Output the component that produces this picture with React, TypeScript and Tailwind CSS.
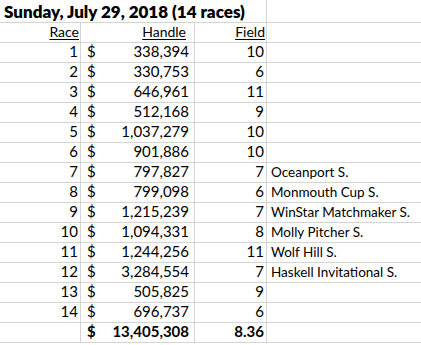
import React from 'react';

const races = [
  { race: 1, handle: '338,394', field: '10', stakes: '' },
  { race: 2, handle: '330,753', field: '6', stakes: '' },
  { race: 3, handle: '646,961', field: '11', stakes: '' },
  { race: 4, handle: '512,168', field: '9', stakes: '' },
  { race: 5, handle: '1,037,279', field: '10', stakes: '' },
  { race: 6, handle: '901,886', field: '10', stakes: '' },
  { race: 7, handle: '797,827', field: '7', stakes: 'Oceanport S.' },
  { race: 8, handle: '799,098', field: '6', stakes: 'Monmouth Cup S.' },
  { race: 9, handle: '1,215,239', field: '7', stakes: 'WinStar Matchmaker S.' },
  { race: 10, handle: '1,094,331', field: '8', stakes: 'Molly Pitcher S.' },
  { race: 11, handle: '1,244,256', field: '11', stakes: 'Wolf Hill S.' },
  { race: 12, handle: '3,284,554', field: '7', stakes: 'Haskell Invitational S.' },
  { race: 13, handle: '505,825', field: '9', stakes: '' },
  { race: 14, handle: '696,737', field: '6', stakes: '' },
];

const cell = 'h-[20px] border-b border-[#d4d4d4] flex items-end leading-none pb-[3px] whitespace-nowrap';

const App: React.FC = () => {
  return (
    <div
      className="w-[421px] h-[345px] bg-white text-black overflow-hidden text-[14px]"
      style={{ fontFamily: 'Lato, "Open Sans", sans-serif' }}
    >
      <div className="grid grid-cols-[81px_114px_72px_1fr]">
        {/* title row */}
        <div className="col-span-3 h-[23px] border-b border-r border-[#d4d4d4] flex items-end pb-[2px] pl-[4px] text-[17px] font-extrabold leading-none whitespace-nowrap">
          Sunday, July 29, 2018 (14 races)
        </div>
        <div className="h-[23px] border-b border-[#d4d4d4]" />

        {/* header row */}
        <div className={`${cell} border-r justify-end pr-[1px]`}>
          <span className="underline underline-offset-2">Race</span>
        </div>
        <div className={`${cell} border-r justify-end pr-[8px]`}>
          <span className="underline underline-offset-2">Handle</span>
        </div>
        <div className={`${cell} border-r justify-end pr-[1px]`}>
          <span className="underline underline-offset-2">Field</span>
        </div>
        <div className={cell} />

        {races.map((r) => (
          <React.Fragment key={r.race}>
            <div className={`${cell} border-r justify-end pr-[2px] text-[15px]`}>{r.race}</div>
            <div className={`${cell} border-r justify-between pl-[6px] pr-[5px] text-[15px]`}>
              <span>$</span>
              <span>{r.handle}</span>
            </div>
            <div className={`${cell} border-r justify-end pr-[2px] text-[15px]`}>{r.field}</div>
            <div className={`${cell} pl-[4px] text-[13.5px]`}>{r.stakes}</div>
          </React.Fragment>
        ))}

        {/* totals */}
        <div className={`${cell} border-r`} />
        <div className={`${cell} border-r justify-between pl-[6px] pr-[5px] font-bold text-[15px]`}>
          <span>$</span>
          <span>13,405,308</span>
        </div>
        <div className={`${cell} border-r justify-end pr-[2px] font-bold text-[15px]`}>8.36</div>
        <div className={cell} />
      </div>
    </div>
  );
};

export default App;
